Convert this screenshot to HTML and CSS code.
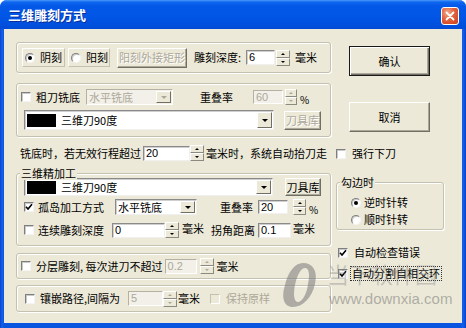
FILE: index.html
```html
<!DOCTYPE html>
<html lang="zh">
<head>
<meta charset="utf-8">
<title>三维雕刻方式</title>
<link rel="stylesheet" href="styles.css">
</head>
<body>
<div class="window">
  <div class="titlebar">
    <span class="title">三维雕刻方式</span>
    <span class="close"><svg width="10" height="10" viewBox="0 0 10 10"><path d="M1.5 1.5L8.5 8.5M8.5 1.5L1.5 8.5" stroke="#fff" stroke-width="1.8" stroke-linecap="round"/></svg></span>
  </div>
  <div class="client">
    <div class="left">
      <!-- group 1 -->
      <div class="group g1 row">
        <span class="opt o1"><span class="radio on"></span><span class="ot">阴刻</span></span>
        <span class="opt o2"><span class="radio"></span><span class="ot">阳刻</span></span>
        <span class="btn dis b-rect">阳刻外接矩形</span>
        <span class="t ml7">雕刻深度:</span>
        <span class="edit e-depth">6</span>
        <span class="spin s-depth"><i class="up"></i><i class="dn"></i></span>
        <span class="t ml5">毫米</span>
      </div>
      <!-- group 2 -->
      <div class="group g2">
        <div class="row r16">
          <span class="chk ml4"></span>
          <span class="t ml5">粗刀铣底</span>
          <span class="combo dis c-mode1"><span class="ct">水平铣底</span><span class="dd"><b></b></span></span>
          <span class="t ml27">重叠率</span>
          <span class="edit dis e-ov1">60</span>
          <span class="spin dis s-ov1"><i class="up"></i><i class="dn"></i></span>
          <span class="t pct">%</span>
        </div>
        <div class="row r20 mt5">
          <span class="combo c-tool1"><span class="sw"></span><span class="ct">三维刀90度</span><span class="dd"><b></b></span></span>
          <span class="btn dis b-lib1">刀具库</span>
        </div>
      </div>
      <!-- idle travel line -->
      <div class="row r16 line">
        <span class="t ml4">铣底时，若无效行程超过</span>
        <span class="edit e-travel">20</span>
        <span class="spin s-travel"><i class="up"></i><i class="dn"></i></span>
        <span class="t ml2">毫米时，系统自动抬刀走</span>
      </div>
      <!-- group 3 -->
      <div class="group g3">
        <span class="legend">三维精加工</span>
        <div class="row r18">
          <span class="combo c-tool2"><span class="sw"></span><span class="ct">三维刀90度</span><span class="dd"><b></b></span></span>
          <span class="btn b-lib2">刀具库</span>
        </div>
        <div class="row r16 mt3">
          <span class="chk on ml7"><svg width="8" height="8" viewBox="0 0 8 8"><path d="M1 3.8L3 6 7 1.2" fill="none" stroke="#000" stroke-width="1.6"/></svg></span>
          <span class="t ml4">孤岛加工方式</span>
          <span class="combo c-mode2"><span class="ct">水平铣底</span><span class="dd"><b></b></span></span>
          <span class="t ml23">重叠率</span>
          <span class="edit e-ov2">20</span>
          <span class="spin s-ov2"><i class="up"></i><i class="dn"></i></span>
          <span class="t pct">%</span>
        </div>
        <div class="row r16 mt7">
          <span class="chk ml7"></span>
          <span class="t ml4">连续雕刻深度</span>
          <span class="edit e-cont">0</span>
          <span class="spin s-cont"><i class="up"></i><i class="dn"></i></span>
          <span class="t ml3 up2">毫米</span>
          <span class="t ml7">拐角距离</span>
          <span class="edit e-corner">0.1</span>
          <span class="t ml2 up2">毫米</span>
        </div>
      </div>
      <!-- group 4 -->
      <div class="group g4 row">
        <span class="chk ml4"></span>
        <span class="t ml5">分层雕刻, 每次进刀不超过</span>
        <span class="edit dis e-layer">0.2</span>
        <span class="spin dis s-layer"><i class="up"></i><i class="dn"></i></span>
        <span class="t ml3">毫米</span>
      </div>
      <!-- group 5 -->
      <div class="group g5 row">
        <span class="chk ml8"></span>
        <span class="t ml5">镶嵌路径,间隔为</span>
        <span class="edit dis e-inlay">5</span>
        <span class="spin dis s-inlay"><i class="up"></i><i class="dn"></i></span>
        <span class="t ml1">毫米</span>
        <span class="chk dis ml10"></span>
        <span class="t dtext ml6">保持原样</span>
      </div>
    </div>

    <div class="right">
      <span class="btn def b-ok">确认</span>
      <span class="btn b-cancel">取消</span>
      <div class="row r13 force">
        <span class="chk"></span>
        <span class="t ml6">强行下刀</span>
      </div>
      <div class="group g-dir">
        <span class="legend">勾边时</span>
        <div class="row r13">
          <span class="radio on ml14"></span><span class="t ml3">逆时针转</span>
        </div>
        <div class="row r13 mt4">
          <span class="radio ml14"></span><span class="t ml3">顺时针转</span>
        </div>
      </div>
      <div class="row r13 check1">
        <span class="chk on ml2"><svg width="8" height="8" viewBox="0 0 8 8"><path d="M1 3.8L3 6 7 1.2" fill="none" stroke="#000" stroke-width="1.6"/></svg></span>
        <span class="t ml6">自动检查错误</span>
      </div>
      <div class="row r13 check2">
        <span class="chk on ml2"><svg width="8" height="8" viewBox="0 0 8 8"><path d="M1 3.8L3 6 7 1.2" fill="none" stroke="#000" stroke-width="1.6"/></svg></span>
        <span class="t focus ml3">自动分割自相交环</span>
      </div>
    </div>
  </div>

  <div class="watermark">
    <svg class="wm-logo" width="46" height="46" viewBox="0 0 46 46"><path fill-rule="evenodd" fill="rgba(110,110,110,0.5)" d="M23 1C33 1 38 9 35 22C32 36 22 45 13 45C4 45 1 36 5 23C8 10 15 1 23 1ZM25 6C21 6 17 13 15 23C13 33 14 40 18 40C22 40 27 32 28 22C30 12 29 6 25 6Z"/></svg>
    <span class="wm-cn">当下软件园</span>
    <span class="wm-url">www.downxia.com</span>
  </div>
</div>
</body>
</html>
```

FILE: styles.css
```css
* { box-sizing: border-box; margin: 0; padding: 0; }
body {
  margin: 0;
  background: #fff;
  font-family: "Noto Sans CJK SC", "Liberation Sans", sans-serif;
  font-size: 11px;
  line-height: 13px;
  color: #000;
}
.window {
  position: relative;
  width: 466px;
  height: 328px;
  background: linear-gradient(90deg, #0842C8 0, #1460EC 2px, #0A55E0 4px, #0A55E0 460px, #1460EC 463px, #0842C8 466px);
  border-radius: 7px 7px 0 0;
  display: flex;
  flex-direction: column;
  overflow: hidden;
}
.titlebar {
  height: 29px;
  flex: none;
  display: flex;
  align-items: center;
  justify-content: space-between;
  padding: 0 7px 0 8px;
  background: linear-gradient(#4C9BFA 0, #1068EE 2px, #0458E8 6px, #0256E6 16px, #0050DE 24px, #004AD6 29px);
}
.title {
  color: #fff;
  font-weight: bold;
  font-size: 13px;
  line-height: 16px;
  text-shadow: 1px 1px 0 #0A2E9C;
}
.close {
  width: 18px;
  height: 18px;
  margin-top: 3px;
  border: 1px solid #fff;
  border-radius: 3px;
  background: radial-gradient(circle at 35% 30%, #F4A88A 0, #E2623E 45%, #C93E1C 100%);
  display: flex;
  align-items: center;
  justify-content: center;
}
.client {
  flex: 1;
  margin: 0 4px 5px 4px;
  background: #ECE9D8;
  display: flex;
  padding: 0 0 0 12px;
}
.left { width: 315px; display: flex; flex-direction: column; }
.right { width: 108px; margin-left: 5px; display: flex; flex-direction: column; }

.row { display: flex; align-items: center; }
.r13 { height: 13px; }
.r16 { height: 16px; }
.r18 { height: 18px; }
.r20 { height: 20px; }
.t { white-space: nowrap; flex: none; }
.dtext { color: #ACA899; }
.pct { margin-left: 3px; align-self: flex-end; font-size: 10px; line-height: 11px; }
.up2 { align-self: flex-start; }

.ml1 { margin-left: 1px; } .ml2 { margin-left: 2px; } .ml3 { margin-left: 3px; }
.ml4 { margin-left: 4px; } .ml5 { margin-left: 5px; } .ml6 { margin-left: 6px; }
.ml7 { margin-left: 7px; } .ml8 { margin-left: 8px; } .ml10 { margin-left: 10px; }
.ml14 { margin-left: 14px; } .ml23 { margin-left: 23px; } .ml27 { margin-left: 27px; }
.mt3 { margin-top: 3px; } .mt4 { margin-top: 4px; } .mt5 { margin-top: 5px; } .mt7 { margin-top: 7px; }

/* group boxes */
.group {
  position: relative;
  flex: none;
  border: 1px solid #C4C1B1;
  border-radius: 3px;
  box-shadow: inset 1px 1px 0 #fff, 1px 1px 0 #fff;
}
.legend {
  position: absolute;
  top: -7px;
  left: 3px;
  padding: 0 1px;
  background: #ECE9D8;
  white-space: nowrap;
}
.g1 { margin-top: 13px; height: 31px; }
.g2 { margin-top: 10px; padding: 5px 0 6px; }
.line { margin-top: 8px; flex: none; }
.g3 { margin-top: 12px; padding: 4px 0 7px; }
.g4 { margin-top: 7px; height: 26px; }
.g5 { margin-top: 6px; height: 27px; }
.g-dir { margin-top: 22px; height: 48px; padding-top: 13px; }

/* radio options in group 1 */
.opt {
  display: flex;
  align-items: center;
  height: 19px;
  padding-left: 2px;
  border: 1px solid;
  border-color: #fff #C4C1B1 #C4C1B1 #fff;
  flex: none;
}
.o1 { margin-left: 5px; width: 43px; }
.o2 { margin-left: 3px; width: 42px; }
.ot { margin-left: 5px; white-space: nowrap; }

/* checkbox / radio */
.chk {
  width: 10px;
  height: 10px;
  flex: none;
  background: #fff;
  border: 1px solid;
  border-color: #7F7F7F #F4F4F4 #F4F4F4 #7F7F7F;
  box-shadow: inset 1px 1px 0 #C9C9C9;
  display: flex;
  align-items: center;
  justify-content: center;
}
.chk svg { display: block; }
.chk.dis { background: #ECE9D8; border-color: #C4C1B1 #fff #fff #C4C1B1; box-shadow: none; }
.radio {
  width: 10px;
  height: 10px;
  flex: none;
  border-radius: 50%;
  background: #fff;
  border: 1px solid;
  border-color: #7F7F7F #F4F4F4 #F4F4F4 #7F7F7F;
  box-shadow: inset 1px 1px 0 #C9C9C9;
  display: flex;
  align-items: center;
  justify-content: center;
}
.radio.on::after {
  content: "";
  width: 4px;
  height: 4px;
  border-radius: 50%;
  background: #000;
}

/* buttons */
.btn {
  display: flex;
  align-items: center;
  justify-content: center;
  flex: none;
  white-space: nowrap;
  background: #ECE9D8;
  border: 1px solid;
  border-color: #fff #716F64 #716F64 #fff;
  box-shadow: inset -1px -1px 0 #ACA899;
}
.btn.dis { color: #ACA899; text-shadow: 1px 1px 0 #fff; }
.btn.def {
  border: 1px solid #1A1A1A;
  box-shadow: inset 1px 1px 0 #fff, inset -1px -1px 0 #716F64, inset -2px -2px 0 #ACA899;
}
.b-rect { margin-left: 7px; width: 70px; height: 20px; }
.b-lib1 { margin-left: 10px; width: 37px; height: 19px; }
.b-lib2 { margin-left: 12px; width: 36px; height: 18px; }
.b-ok { margin: 17px 0 0 13px; width: 81px; height: 30px; }
.b-cancel { margin: 26px 0 0 13px; width: 81px; height: 30px; }

/* edits */
.edit {
  flex: none;
  display: flex;
  align-items: center;
  padding-left: 2px;
  font-family: "Liberation Sans", sans-serif;
  font-size: 11px;
  background: #fff;
  border: 1px solid;
  border-color: #8A8A8A #F0F0F0 #F0F0F0 #8A8A8A;
  box-shadow: inset 1px 1px 0 #CFCFCF;
}
.edit.dis { background: #F2F0E8; color: #ACA899; border-color: #B5B2A4 #fff #fff #B5B2A4; box-shadow: none; }
.e-depth { margin-left: 5px; width: 29px; height: 15px; }
.e-ov1 { margin-left: 20px; width: 30px; height: 14px; }
.e-travel { margin-left: 2px; width: 47px; height: 15px; }
.e-ov2 { margin-left: 5px; width: 30px; height: 14px; }
.e-cont { margin-left: 8px; width: 53px; height: 15px; }
.e-corner { margin-left: 3px; width: 33px; height: 15px; }
.e-layer { margin-left: 2px; width: 32px; height: 15px; }
.e-inlay { margin-left: 8px; width: 35px; height: 15px; }

/* spinners */
.spin { flex: none; display: flex; flex-direction: column; width: 14px; height: 16px; }
.spin i {
  flex: 1;
  display: flex;
  align-items: center;
  justify-content: center;
  background: #ECE9D8;
  border: 1px solid;
  border-color: #fff #8C8A7E #8C8A7E #fff;
}
.spin i.up::after { content: ""; border-left: 2px solid transparent; border-right: 2px solid transparent; border-bottom: 2px solid #000; }
.spin i.dn::after { content: ""; border-left: 2px solid transparent; border-right: 2px solid transparent; border-top: 2px solid #000; }
.spin.dis i.up::after { border-bottom-color: #ACA899; }
.spin.dis i.dn::after { border-top-color: #ACA899; }
.s-depth { margin-left: 1px; }
.s-ov1 { margin-left: 2px; width: 12px; }
.s-travel { width: 14px; }
.s-ov2 { margin-left: 5px; width: 13px; }
.s-cont { width: 14px; }
.s-layer { margin-left: 3px; }
.s-inlay { width: 14px; }

/* combos */
.combo {
  flex: none;
  display: flex;
  align-items: center;
  background: #fff;
  border: 1px solid;
  border-color: #8A8A8A #F0F0F0 #F0F0F0 #8A8A8A;
  box-shadow: inset 1px 1px 0 #CFCFCF;
  padding-left: 2px;
}
.combo .ct { flex: 1; white-space: nowrap; }
.combo .dd {
  flex: none;
  width: 15px;
  align-self: stretch;
  margin: 1px;
  display: flex;
  align-items: center;
  justify-content: center;
  background: #ECE9D8;
  border: 1px solid;
  border-color: #fff #716F64 #716F64 #fff;
}
.combo .dd b { width: 0; height: 0; border-left: 3px solid transparent; border-right: 3px solid transparent; border-top: 3px solid #000; }
.combo.dis { background: #F2F0E8; border-color: #B5B2A4 #fff #fff #B5B2A4; box-shadow: none; color: #ACA899; }
.combo.dis .dd b { border-top-color: #ACA899; }
.sw { width: 29px; height: 13px; background: #000; flex: none; margin-right: 5px; }
.c-mode1 { margin-left: 6px; width: 87px; height: 16px; }
.c-tool1 { margin-left: 7px; width: 250px; height: 20px; }
.c-tool2 { margin-left: 7px; width: 249px; height: 18px; }
.c-mode2 { margin-left: 11px; width: 82px; height: 16px; }

/* right column rows */
.force { margin-top: 15px; }
.check1 { margin-top: 16px; }
.check2 { margin-top: 8px; }
.focus { outline: 1px dotted #333; outline-offset: 0; padding: 0 1px; }

/* watermark overlay */
.watermark { position: absolute; left: 0; top: 0; width: 466px; height: 328px; pointer-events: none; }
.wm-logo { position: absolute; left: 280px; top: 262px; }
.wm-cn {
  position: absolute;
  left: 327px;
  top: 259px;
  font-size: 22px;
  line-height: 28px;
  color: rgba(120, 120, 120, 0.35);
  white-space: nowrap;
}
.wm-url {
  position: absolute;
  left: 329px;
  top: 290px;
  font-family: "Liberation Sans", sans-serif;
  font-size: 15px;
  line-height: 18px;
  color: rgba(110, 110, 110, 0.5);
  white-space: nowrap;
}
```
